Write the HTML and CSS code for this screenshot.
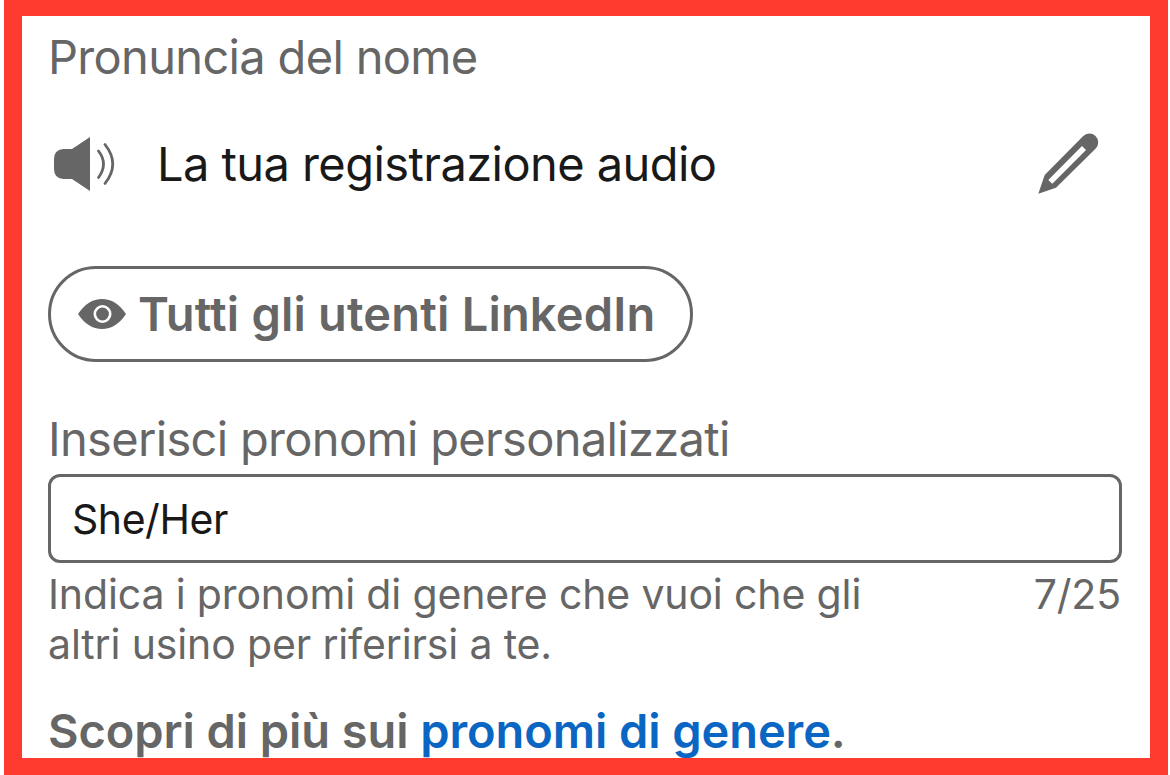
FILE: index.html
```
<!DOCTYPE html>
<html lang="it">
  <head>
    <meta charset="UTF-8" />
    <meta name="viewport" content="width=device-width, initial-scale=1.0" />
    <title>Pronuncia del nome</title>
    <link rel="stylesheet" href="styles.css">
  </head>
  <body>
    <main class="panel">
      <h2 class="title">Pronuncia del nome</h2>

      <div class="recording">
        <svg width="70" height="60" viewBox="0 0 70 60" fill="none">
          <path d="M15 15H24L42 3V57L24 45H15Q6 44 6 35V25Q6 16 15 15Z" fill="#666666" />
          <path d="M50.5 17Q60.5 30 50.5 43.5M57 10.5Q72.5 30 57 49.500" stroke="#666666" stroke-width="2.8" stroke-linecap="round" />
        </svg>
        <span class="recording-name">La tua registrazione audio</span>
        <button class="edit" aria-label="Modifica">
          <svg width="62" height="62" viewBox="0 0 62 62">
            <path fill="#666666" fill-rule="evenodd" d="M0.300 60.700L6.700 42L45 3.200A8.800 8.800 0 0 1 57.700 15.500L18 54.700ZM10.300 47L14.300 50.700L48 17L44 13Z" />
          </svg>
        </button>
      </div>

      <button class="visibility">
        <svg width="48" height="32" viewBox="0 0 48 32">
          <path d="M0 16Q10 1 24 1T48 16Q38 31 24 31T0 16Z" fill="#666666" />
          <circle cx="24.5" cy="16" r="7.7" fill="#666666" stroke="#fff" stroke-width="2.6" />
        </svg>
        <span>Tutti gli utenti LinkedIn</span>
      </button>

      <label class="label" for="pronouns">Inserisci pronomi personalizzati</label>
      <input class="input" id="pronouns" type="text" value="She/Her" maxlength="25" />
      <div class="help">
        <p class="help-text">Indica i pronomi di genere che vuoi che gli<br />altri usino per riferirsi a te.</p>
        <span class="counter">7/25</span>
      </div>

      <p class="more">Scopri di più sui <a href="#">pronomi di genere</a>.</p>
    </main>
  </body>
</html>
```
FILE: styles.css
```
* {
  box-sizing: border-box;
}
body {
  margin: 0;
  background: #fff;
  color: #666666;
  font-family: Inter, sans-serif;
  overflow: hidden;
}
h2,
p {
  margin: 0;
}
button {
  background: none;
  font-family: inherit;
  color: inherit;
  cursor: pointer;
}
.panel {
  display: flex;
  flex-direction: column;
  width: 1164px;
  height: 775px;
  margin-left: 4px;
  padding: 11px 28px 0 26px;
  border: 18px solid #ff3b2f;
  border-top-width: 16px;
  border-bottom-width: 17px;
}
.title,
.label {
  font-size: 47px;
  font-weight: 400;
  line-height: 60px;
  letter-spacing: -0.67px;
}
.recording {
  display: flex;
  align-items: center;
  height: 60px;
  margin-top: 47px;
}
.recording-name {
  margin-left: 39px;
  font-size: 47px;
  line-height: 60px;
  letter-spacing: -0.57px;
  color: #191919;
}
.edit {
  width: 62px;
  height: 62px;
  margin: 0 22px 0 auto;
  padding: 0;
  border: none;
}
.visibility {
  display: flex;
  flex-shrink: 0;
  align-items: center;
  align-self: flex-start;
  gap: 12px;
  width: 645px;
  height: 96px;
  margin-top: 72px;
  padding: 0 0 0 27px;
  border: 3px solid #666666;
  border-radius: 48px;
  font-size: 47px;
  font-weight: 600;
  letter-spacing: 0.2px;
  white-space: nowrap;
}
.visibility span {
  padding-bottom: 2px;
}
.label {
  margin-top: 47px;
}
.input {
  flex-shrink: 0;
  width: 100%;
  height: 89px;
  margin-top: 5px;
  padding: 1px 21px 0;
  border: 3px solid #666666;
  border-radius: 12px;
  font-family: inherit;
  font-size: 41px;
  letter-spacing: -0.45px;
  color: #191919;
}
.help {
  display: flex;
  justify-content: space-between;
  margin-top: 6px;
  font-size: 41px;
  line-height: 50px;
  letter-spacing: -0.14px;
}
.counter {
  margin-right: 1px;
}
.more {
  margin-top: 32px;
  font-size: 47px;
  font-weight: 600;
  line-height: 60px;
  letter-spacing: -0.08px;
}
.more a {
  color: #0a66c2;
  text-decoration: none;
}
```
